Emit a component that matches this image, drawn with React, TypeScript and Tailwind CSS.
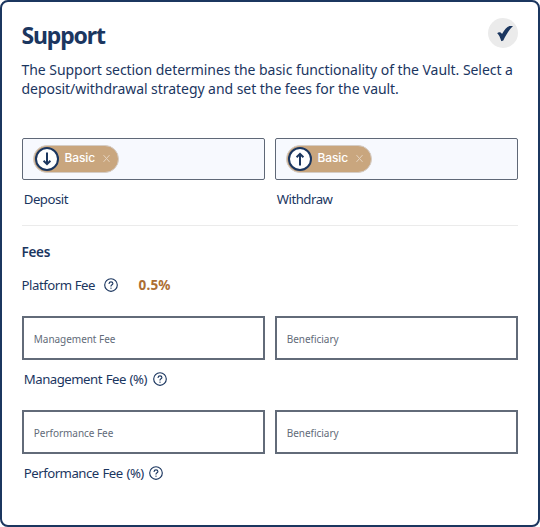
import { ReactNode } from "react";

function Help() {
  return (
    <svg className="size-[14px] shrink-0" viewBox="0 0 14 14" fill="none" stroke="#1b365f" strokeWidth="1.15" strokeLinecap="round">
      <circle cx="7" cy="7" r="6.3" />
      <path d="M5.1 5.5C5.2 4.4 6 3.8 7 3.8C8.1 3.8 8.9 4.4 8.9 5.4C8.9 6.7 7 6.7 7 8.1" />
      <path d="M7 10.1V10.2" strokeWidth="1.3" />
    </svg>
  );
}

function Strategy({ up = false, label }: { up?: boolean; label: ReactNode }) {
  return (
    <div className="w-[243px]">
      <div className="h-[42px] rounded-[2px] border border-[#5f6877] bg-[#f7f9fe] pt-[6px] pl-[10px]">
        <div className="flex h-[28px] w-[86px] items-center rounded-full border border-[#d5cdc6] bg-[#c9a67e] pl-[1px]">
          <svg className="size-[24px] shrink-0" viewBox="0 0 24 24" fill="none" stroke="#1b365f">
            <circle cx="12" cy="12" r="11" fill="white" strokeWidth="2" />
            {up ? (
              <path d="M12 18.4V7.5M8.6 10.2L12 6.9L15.4 10.2" strokeWidth="2" />
            ) : (
              <path d="M12 5.5V16.5M8.6 13.8L12 17.1L15.4 13.8" strokeWidth="2" />
            )}
          </svg>
          <span className="ml-[5.5px] w-[31.5px] -translate-y-px font-['Inter',sans-serif] text-[12px] leading-4 font-medium tracking-[-0.1px] text-white">Basic</span>
          <svg className="ml-[7px] size-[7px] -translate-y-px" viewBox="0 0 7 7" stroke="#e5d3bf" strokeWidth="1">
            <path d="M.5 .1L6.5 6.9M6.5 .1L.5 6.9" />
          </svg>
        </div>
      </div>
      <div className="mt-[10px] pl-[1.8px] text-[13.2px] leading-[18px] tracking-[-0.5px]">{label}</div>
    </div>
  );
}

function Field({ placeholder }: { placeholder: string }) {
  return (
    <input
      className="h-[44px] w-[243px] rounded-none border-2 border-[#626b79] bg-white pt-[2px] pl-[9.8px] text-[10px] tracking-[-0.04px] outline-none placeholder:text-[#626b79] placeholder:opacity-100"
      placeholder={placeholder}
    />
  );
}

function FeeFields({ name }: { name: string }) {
  return (
    <div className="h-[94px]">
      <div className="flex gap-[10px]">
        <Field placeholder={name} />
        <Field placeholder="Beneficiary" />
      </div>
      <div className="mt-[10px] flex items-center gap-[5.5px] pl-[1.8px]">
        <span className="text-[13.2px] leading-[18px] tracking-[-0.5px] [word-spacing:0.8px]">{name} (%)</span>
        <Help />
      </div>
    </div>
  );
}

export default function App() {
  return (
    <main className="h-[527px] w-[540px] rounded-[8px] border-2 border-[#1b365f] bg-white px-[20px] pt-[16px] font-['Noto_Sans',sans-serif] text-[#1b365f]">
      <header className="flex h-[42px] justify-between">
        <h1 className="-ml-[0.5px] pt-[1px] text-[23px] leading-[32px] font-bold tracking-[-1.15px]">Support</h1>
        <div className="flex size-[30px] items-center justify-center rounded-full bg-[#ebebeb]">
          <svg className="size-[16px] translate-x-[2px] translate-y-[0.5px]" viewBox="0 0 16 16" fill="#1b365f">
            <path d="M.2 7.8C1.5 6.3 4 6.4 5 8.6C7.2 4.7 9.8 1.3 12.6 .6C13.6 .4 14.6 .4 16 .4C12.4 3.8 9.3 9 6.3 15L4.3 15.8C3.2 12.3 2.2 9.5 .2 7.8Z" />
          </svg>
        </div>
      </header>
      <p className="-ml-[0.5px] h-[78px] text-[14px] leading-[19px] tracking-[-0.05px] whitespace-nowrap">
        The Support section determines the basic functionality of the Vault. Select a
        <br />
        deposit/withdrawal strategy and set the fees for the vault.
      </p>
      <div className="flex h-[87px] gap-[10px]">
        <Strategy label="Deposit" />
        <Strategy up label="Withdraw" />
      </div>
      <div className="w-[496px] border-t border-[#ebebeb] pt-[17px]">
        <h2 className="-ml-[0.5px] text-[13.5px] leading-[18px] font-semibold tracking-[-0.3px]">Fees</h2>
      </div>
      <div className="mt-[15px] -ml-[0.5px] flex h-[40px] items-start">
        <span className="w-[74px] text-[13.2px] leading-[18px] tracking-[-0.45px] whitespace-nowrap">Platform Fee</span>
        <span className="mt-[2px] ml-[8.5px]"><Help /></span>
        <span className="ml-[20.5px] text-[13.5px] leading-[18px] font-bold tracking-[0.2px] text-[#ad6d32]">0.5%</span>
      </div>
      <FeeFields name="Management Fee" />
      <FeeFields name="Performance Fee" />
    </main>
  );
}
